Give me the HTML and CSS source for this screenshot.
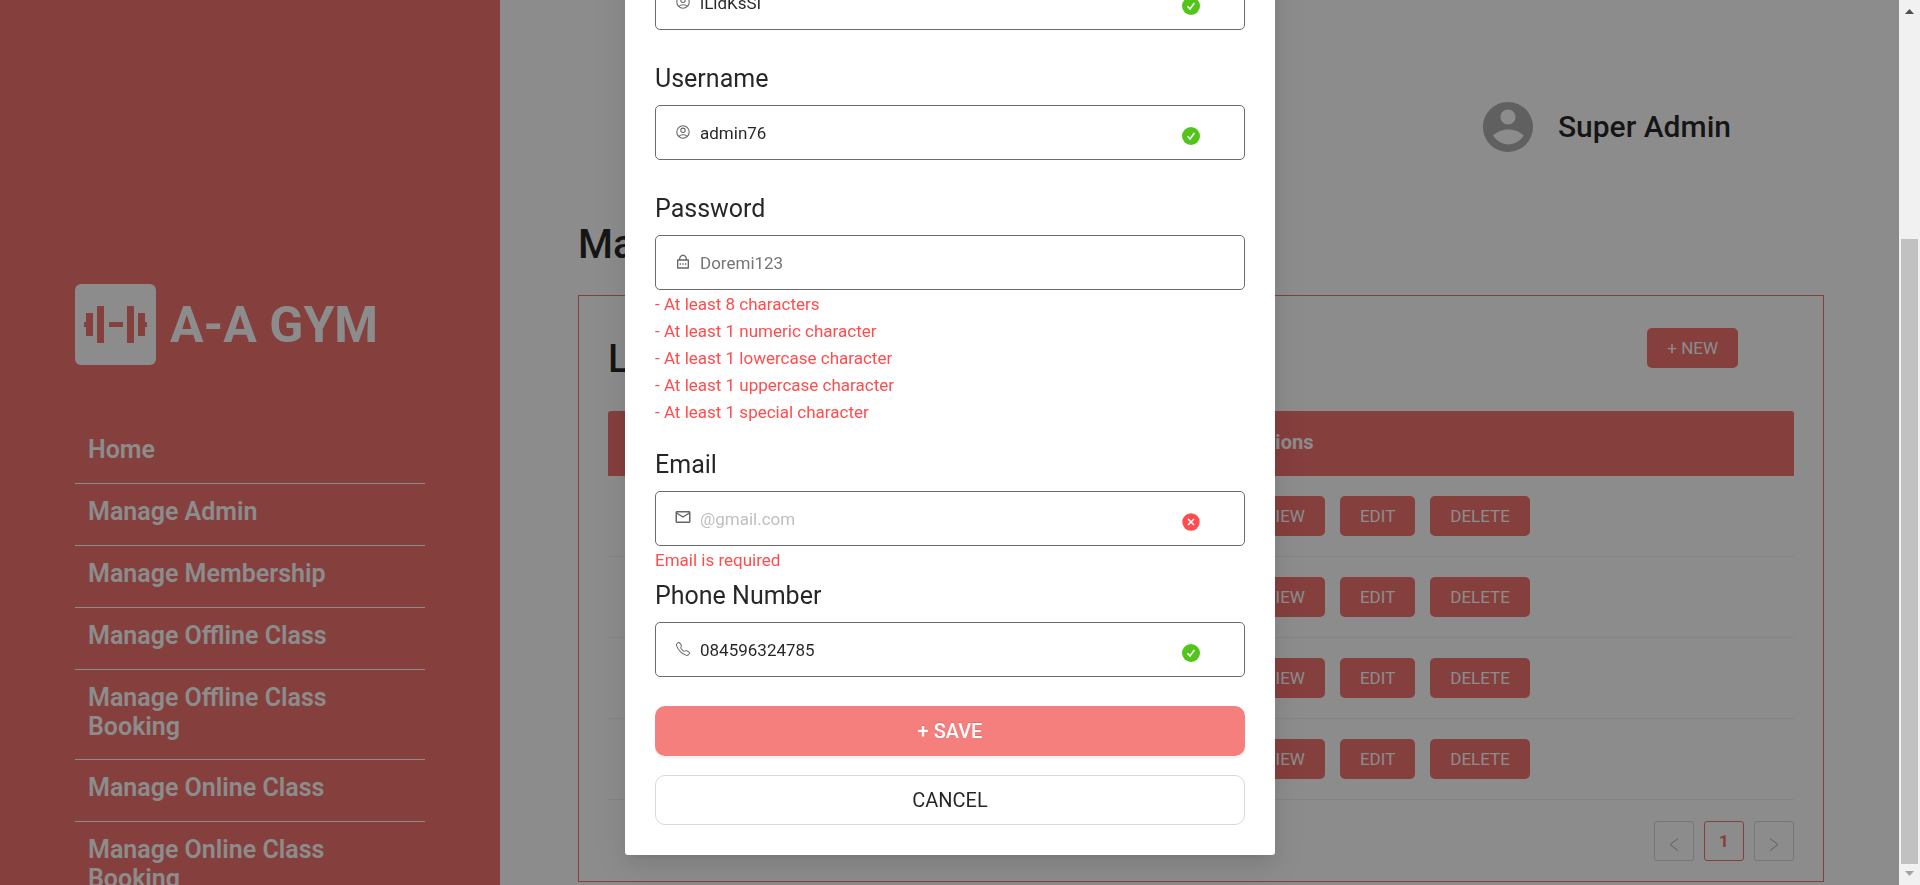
FILE: index.html
```html
<!DOCTYPE html>
<html lang="en">
<head>
<meta charset="utf-8">
<title>A-A GYM - Manage Admin</title>
<link rel="stylesheet" href="styles.css">
</head>
<body>
<svg class="sprite" aria-hidden="true">
  <symbol id="i-user" viewBox="0 0 24 24"><path d="M12 2C17.52 2 22 6.48 22 12C22 17.52 17.52 22 12 22C6.48 22 2 17.52 2 12C2 6.48 6.48 2 12 2ZM6.023 15.416C7.491 17.606 9.695 19 12.16 19C14.624 19 16.829 17.607 18.296 15.416C16.688 13.917 14.53 13 12.16 13C9.789 13 7.631 13.917 6.023 15.416ZM12 11C13.657 11 15 9.657 15 8C15 6.343 13.657 5 12 5C10.343 5 9 6.343 9 8C9 9.657 10.343 11 12 11Z"/></symbol>
  <symbol id="i-user-line" viewBox="0 0 24 24"><g fill="none" stroke="currentColor" stroke-width="1.600"><circle cx="12" cy="12" r="9.300"/><circle cx="12" cy="9.500" r="3.300"/><path d="M5.800 18.400Q8 16 12.100 16T18.400 18.400"/></g></symbol>
  <symbol id="i-lock" viewBox="0 0 24 24"><path d="M18 8H20C20.55 8 21 8.45 21 9V21C21 21.55 20.55 22 20 22H4C3.45 22 3 21.55 3 21V9C3 8.45 3.45 8 4 8H6V7C6 3.69 8.69 1 12 1C15.31 1 18 3.69 18 7V8ZM5 10V20H19V10H5ZM11 14H13V16H11V14ZM7 14H9V16H7V14ZM15 14H17V16H15V14ZM16 8V7C16 4.79 14.21 3 12 3C9.79 3 8 4.79 8 7V8H16Z"/></symbol>
  <symbol id="i-mail" viewBox="0 0 24 24"><path d="M22 6c0-1.100-.9-2-2-2H4c-1.100 0-2 .9-2 2v12c0 1.100.9 2 2 2h16c1.100 0 2-.9 2-2V6zm-2 0l-8 5-8-5h16zm0 12H4V8l8 5 8-5v10z"/></symbol>
  <symbol id="i-phone" viewBox="0 0 16 16"><path d="M3.654 1.328a.678.678 0 0 0-1.015-.063L1.605 2.300c-.483.484-.661 1.169-.45 1.770a17.568 17.568 0 0 0 4.168 6.608 17.569 17.569 0 0 0 6.608 4.168c.601.211 1.286.033 1.770-.45l1.034-1.034a.678.678 0 0 0-.063-1.015l-2.307-1.794a.678.678 0 0 0-.58-.122l-2.190.547a1.745 1.745 0 0 1-1.657-.459L5.482 8.062a1.745 1.745 0 0 1-.46-1.657l.548-2.190a.678.678 0 0 0-.122-.58L3.654 1.328zM1.884.511a1.745 1.745 0 0 1 2.612.163L6.290 2.980c.329.423.445.974.315 1.494l-.547 2.190a.678.678 0 0 0 .178.643l2.457 2.457a.678.678 0 0 0 .644.178l2.189-.547a1.745 1.745 0 0 1 1.494.315l2.306 1.794c.829.645.905 1.870.163 2.611l-1.034 1.034c-.740.740-1.846 1.065-2.877.702a18.634 18.634 0 0 1-7.010-4.420 18.634 18.634 0 0 1-4.420-7.009c-.362-1.030-.037-2.137.703-2.877L1.885.511z"/></symbol>
  <symbol id="i-ok" viewBox="0 0 18 18"><circle cx="9" cy="9" r="9"/><path d="M5.500 9.200L8 12L12.400 6" fill="none" stroke="#fff" stroke-width="1.500"/></symbol>
  <symbol id="i-bad" viewBox="0 0 18 18"><circle cx="9" cy="9" r="8.700"/><path d="M6 6L12 12M12 6L6 12" fill="none" stroke="#fff" stroke-width="1.500"/></symbol>
</svg>

<div class="app">
  <aside class="sidebar">
    <div class="brand">
      <svg class="brand-logo" viewBox="0 0 81 81" aria-hidden="true"><rect width="81" height="81" rx="6" fill="#fff"/><path fill="#f27370" d="M11 29h7v23h-7v-9h-2v-5h2zM22 22h7v37h-7zM34 38h14v5H34zM52 22h7v37h-7zM63 29h7v9h2v5h-2v9h-7z"/></svg>
      <span class="brand-name">A-A GYM</span>
    </div>
    <nav class="nav">
      <a href="#">Home</a>
      <a href="#">Manage Admin</a>
      <a href="#">Manage Membership</a>
      <a href="#">Manage Offline Class</a>
      <a href="#">Manage Offline Class Booking</a>
      <a href="#">Manage Online Class</a>
      <a href="#">Manage Online Class Booking</a>
    </nav>
  </aside>

  <main class="main">
    <header class="account">
      <svg class="avatar" viewBox="2 2 20 20" aria-hidden="true"><use href="#i-user" width="24" height="24"/></svg>
      <span>Super Admin</span>
    </header>
    <h1 class="page-title">Manage Admin</h1>
    <section class="panel">
      <div class="toolbar">
        <h2>List Admin</h2>
        <button class="btn btn-new" type="button">+ NEW</button>
      </div>
      <table class="table">
        <thead><tr><th>Name</th><th class="col-actions">Actions</th></tr></thead>
        <tbody>
          <tr><td></td><td><div class="actions"><button class="btn" type="button">VIEW</button><button class="btn" type="button">EDIT</button><button class="btn" type="button">DELETE</button></div></td></tr>
          <tr><td></td><td><div class="actions"><button class="btn" type="button">VIEW</button><button class="btn" type="button">EDIT</button><button class="btn" type="button">DELETE</button></div></td></tr>
          <tr><td></td><td><div class="actions"><button class="btn" type="button">VIEW</button><button class="btn" type="button">EDIT</button><button class="btn" type="button">DELETE</button></div></td></tr>
          <tr><td></td><td><div class="actions"><button class="btn" type="button">VIEW</button><button class="btn" type="button">EDIT</button><button class="btn" type="button">DELETE</button></div></td></tr>
        </tbody>
      </table>
      <div class="pager">
        <button type="button" aria-label="Previous page"><svg viewBox="0 0 14 14"><path d="M11 1.500L3 7.500L11 13.500"/></svg></button>
        <button type="button" class="current">1</button>
        <button type="button" aria-label="Next page"><svg viewBox="0 0 14 14"><path d="M3 1.500L11 7.500L3 13.500"/></svg></button>
      </div>
    </section>
  </main>
</div>

<div class="overlay">
  <form class="modal">
    <div class="field">
      <label for="name">Name</label>
      <div class="control"><svg class="icon"><use href="#i-user-line"/></svg><input id="name" type="text" value="lLldKsSI"><svg class="status ok"><use href="#i-ok"/></svg></div>
    </div>
    <div class="field">
      <label for="username">Username</label>
      <div class="control"><svg class="icon"><use href="#i-user-line"/></svg><input id="username" type="text" value="admin76"><svg class="status ok"><use href="#i-ok"/></svg></div>
    </div>
    <div class="field field-rules">
      <label for="password">Password</label>
      <div class="control"><svg class="icon"><use href="#i-lock"/></svg><input id="password" class="dark-hint" type="text" placeholder="Doremi123"></div>
      <div class="help">
        <div>- At least 8 characters</div>
        <div>- At least 1 numeric character</div>
        <div>- At least 1 lowercase character</div>
        <div>- At least 1 uppercase character</div>
        <div>- At least 1 special character</div>
      </div>
    </div>
    <div class="field field-error">
      <label for="email">Email</label>
      <div class="control"><svg class="icon icon-mail"><use href="#i-mail"/></svg><input id="email" type="text" placeholder="@gmail.com"><svg class="status bad"><use href="#i-bad"/></svg></div>
      <div class="help">Email is required</div>
    </div>
    <div class="field">
      <label for="phone">Phone Number</label>
      <div class="control"><svg class="icon icon-phone"><use href="#i-phone"/></svg><input id="phone" type="text" value="084596324785"><svg class="status ok"><use href="#i-ok"/></svg></div>
    </div>
    <div class="buttons">
      <button class="save" type="button">+ SAVE</button>
      <button class="cancel" type="button">CANCEL</button>
    </div>
  </form>
</div>

<div class="scrollbar" aria-hidden="true">
  <svg class="arrow arrow-up" viewBox="0 0 9 5"><path d="M0 5L4.500 0L9 5z"/></svg>
  <div class="thumb"></div>
  <svg class="arrow" viewBox="0 0 9 5"><path d="M0 0H9L4.500 5z"/></svg>
</div>
</body>
</html>
```
FILE: styles.css
```css
* { box-sizing: border-box; }

body {
  margin: 0;
  height: 100vh;
  overflow: hidden;
  font-family: Roboto, "Open Sans", sans-serif;
  font-size: 17px;
  color: rgba(0, 0, 0, 0.85);
}

button, input { font: inherit; color: inherit; }
.sprite { display: none; }

.app {
  display: flex;
  height: 100vh;
  padding-right: 21px;
  overflow: hidden;
  background: #fff;
}

/* Sidebar */
.sidebar {
  flex: 0 0 500px;
  padding: 284px 75px 0;
  background: #f27370;
  color: #fff;
}
.brand {
  display: flex;
  align-items: center;
  gap: 14px;
  margin-bottom: 57px;
}
.brand-logo { width: 81px; height: 81px; }
.brand-name { font-size: 50px; font-weight: 700; line-height: 60px; }
.nav a {
  display: block;
  min-height: 62px;
  padding: 13px 60px 18px 13px;
  border-bottom: 1px solid #fff;
  color: #fff;
  font-size: 25px;
  font-weight: 600;
  line-height: 29px;
  text-decoration: none;
}

/* Main area */
.main { flex: 1; min-width: 0; padding: 102px 75px 0 78px; }
.account {
  display: flex;
  align-items: center;
  justify-content: flex-end;
  gap: 25px;
  padding-right: 93px;
  font-size: 30px;
  font-weight: 500;
  line-height: 50px;
}
.avatar { width: 50px; height: 50px; fill: #b0b0b0; }
.page-title {
  margin: 69px 0 26px;
  font-size: 40px;
  font-weight: 500;
  line-height: 48px;
}
.panel { padding: 30px 29px 20px; border: 1px solid #f27370; }
.toolbar {
  display: flex;
  align-items: flex-start;
  justify-content: space-between;
  padding: 2px 56px 30px 0;
}
.toolbar h2 {
  margin: 9px 0 0;
  font-size: 38px;
  font-weight: 500;
  line-height: 44px;
}
.btn {
  height: 40px;
  padding: 0 20px;
  border: 0;
  border-radius: 5px;
  background: #f27370;
  color: #fff;
}
.table {
  width: 100%;
  border-collapse: separate;
  border-spacing: 0;
  table-layout: fixed;
}
.table th {
  height: 65px;
  padding: 0 20px 3px;
  background: #f27370;
  color: #fff;
  font-size: 20px;
  font-weight: 700;
  text-align: left;
}
.table th:first-child { border-top-left-radius: 3px; }
.table th:last-child { border-top-right-radius: 3px; }
.table .col-actions { width: 48%; }
.table td { padding: 20px; border-bottom: 1px solid #f0f0f0; }
.actions { display: flex; gap: 15px; }

.pager {
  display: flex;
  justify-content: flex-end;
  gap: 10px;
  padding-top: 21px;
}
.pager button {
  width: 40px;
  height: 40px;
  padding: 0;
  border: 1px solid #d9d9d9;
  border-radius: 3px;
  background: transparent;
}
.pager .current { border-color: #f27370; color: #f27370; font-weight: 700; }
.pager svg {
  width: 14px;
  height: 14px;
  margin-top: 9px;
  fill: none;
  stroke: #b0b0b0;
  stroke-width: 1;
}

/* Dialog */
.overlay {
  position: fixed;
  inset: 0;
  display: flex;
  flex-direction: column;
  justify-content: flex-end;
  align-items: center;
  padding: 0 20px 30px 0;
  background: rgba(0, 0, 0, 0.45);
}
.modal {
  width: 650px;
  padding: 30px;
  background: #fff;
  border-radius: 3px;
  box-shadow: 0 4px 8px -5px rgba(0, 0, 0, 0.12), 0 8px 20px rgba(0, 0, 0, 0.08), 0 11px 35px 10px rgba(0, 0, 0, 0.05);
}
.field { margin-bottom: 29px; }
.field-rules { margin-bottom: 19px; }
.field-error { margin-bottom: 2px; }
.field label {
  display: block;
  margin-bottom: 6px;
  font-size: 25px;
  line-height: 40px;
}
.control {
  position: relative;
  display: flex;
  align-items: center;
  gap: 9px;
  height: 55px;
  padding: 0 19px;
  border: 1px solid #6b6b6b;
  border-radius: 5px;
}
.icon {
  flex: none;
  width: 16px;
  height: 16px;
  margin-bottom: 2px;
  fill: #666;
  color: #666;
}
.icon-mail { width: 18px; height: 18px; margin: 0 -1px 4px; }
.icon-phone { width: 14px; height: 14px; margin: 0 1px 2px; }
.control input {
  flex: 1;
  min-width: 0;
  padding: 0;
  border: 0;
  outline: 0;
  background: transparent;
}
.control input::placeholder { color: #bfbfbf; opacity: 1; }
.control .dark-hint::placeholder { color: #757575; }
.status {
  position: absolute;
  top: 21px;
  right: 44px;
  width: 18px;
  height: 18px;
}
.ok { fill: #52c41a; }
.bad { fill: #ff4d4f; }
.help { padding-top: 1px; color: #ff4d4f; line-height: 27px; }

.buttons { display: flex; flex-direction: column; gap: 19px; }
.buttons button {
  height: 50px;
  border-radius: 10px;
  font-size: 20px;
}
.save {
  border: 0;
  background: #f57f7c;
  color: #fff;
  font-weight: 500;
  text-shadow: 0 -1px 0 rgba(0, 0, 0, 0.12);
  box-shadow: 0 3px 0 rgba(0, 0, 0, 0.04);
}
.cancel { border: 1px solid #d9d9d9; background: #fff; }

/* Scrollbar */
.scrollbar {
  position: fixed;
  top: 0;
  right: 0;
  bottom: 0;
  display: flex;
  flex-direction: column;
  align-items: center;
  width: 21px;
  padding: 9px 2px;
  background: #f1f1f1;
}
.arrow { flex: none; width: 9px; height: 5px; fill: #a3a3a3; }
.arrow-up { fill: #505050; margin-bottom: 225px; }
.thumb {
  flex: 1;
  width: 17px;
  margin-bottom: 7px;
  background: #c1c1c1;
}
```
